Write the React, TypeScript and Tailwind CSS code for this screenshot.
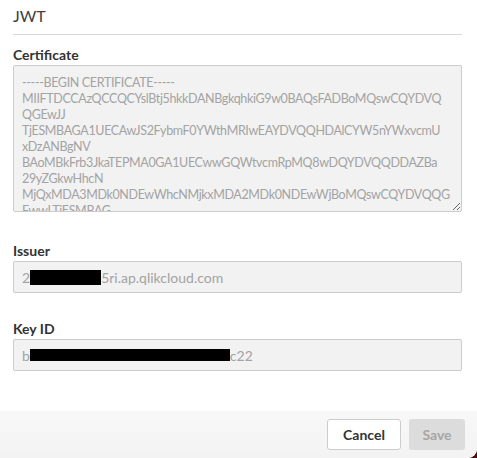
export default function App() {
  const cert = [
    "-----BEGIN CERTIFICATE-----",
    "MIIFTDCCAzQCCQCYslBtj5hkkDANBgkqhkiG9w0BAQsFADBoMQswCQYDVQ",
    "QGEwJJ",
    "TjESMBAGA1UECAwJS2FybmF0YWthMRIwEAYDVQQHDAlCYW5nYWxvcmU",
    "xDzANBgNV",
    "BAoMBkFrb3JkaTEPMA0GA1UECwwGQWtvcmRpMQ8wDQYDVQQDDAZBa",
    "29yZGkwHhcN",
    "MjQxMDA3MDk0NDEwWhcNMjkxMDA2MDk0NDEwWjBoMQswCQYDVQQG",
    "FwwLTjESMBAG",
  ].join("\n");

  return (
    <div className="w-[477px] h-[458px] bg-[#4e0b12]">
      <div className="w-full h-full flex flex-col bg-white overflow-hidden rounded-br-[9px] font-['Source_Sans_Pro','Lato',sans-serif]">
        <div className="flex-1 pl-[13px] pr-[15px]">
          <div className="h-[35px] pt-[6px] border-b border-[#d9d9d9] text-[16px] leading-[20px] text-[#404040]">
            JWT
          </div>

          <label className="block mt-[10px] h-[20px] text-[14px] leading-[20px] font-bold text-[#333]">
            Certificate
          </label>
          <textarea
            readOnly
            wrap="off"
            value={cert}
            className="block w-full h-[147px] mt-0 px-[8px] py-[9px] bg-[#f2f2f2] border border-[#cccccc] rounded-[2px] text-[12.5px] tracking-[-0.35px] leading-[16px] text-[#a3a3a3] overflow-hidden outline-none"
          />

          <label className="block mt-[29px] h-[20px] text-[14px] leading-[20px] font-bold text-[#333]">
            Issuer
          </label>
          <div className="flex items-center h-[32px] px-[8px] bg-[#f2f2f2] border border-[#cccccc] rounded-[2px] text-[14px] text-[#a3a3a3]">
            <span>2</span>
            <span className="inline-block w-[71px] h-[15px] bg-black" />
            <span>5ri.ap.qlikcloud.com</span>
          </div>

          <label className="block mt-[26px] h-[20px] text-[14px] leading-[20px] font-bold text-[#333]">
            Key ID
          </label>
          <div className="flex items-center h-[32px] px-[8px] bg-[#f2f2f2] border border-[#cccccc] rounded-[2px] text-[14px] text-[#a3a3a3]">
            <span>b</span>
            <span className="inline-block w-[200px] h-[12px] bg-black" />
            <span>c22</span>
          </div>
        </div>

        <div className="h-[47px] flex items-center justify-end gap-[8px] pr-[12px] bg-gradient-to-b from-[#f8f8f8] to-[#f3f3f3]">
          <button className="w-[74px] h-[31px] bg-white border border-[#cccccc] rounded-[3px] text-[14px] font-bold text-[#333]">
            Cancel
          </button>
          <button className="w-[56px] h-[31px] bg-[#dcdcdc] rounded-[3px] text-[14px] font-bold text-[#a6a6a6]">
            Save
          </button>
        </div>
      </div>
    </div>
  );
}
